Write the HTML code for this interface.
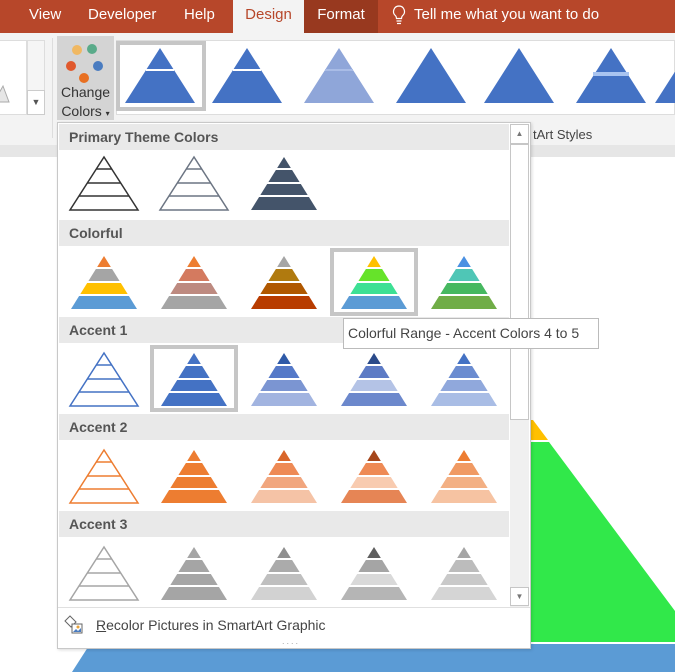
<!DOCTYPE html>
<html><head><meta charset="utf-8"><style>
*{margin:0;padding:0;box-sizing:border-box}
body{width:675px;height:672px;overflow:hidden;position:relative;background:#fff;font-family:"Liberation Sans",sans-serif}
.abs{position:absolute}
.tab{position:absolute;top:0;height:33px;line-height:29px;color:#fff;font-size:15px}
.hdr{position:absolute;left:59px;width:450px;height:26px;background:#e9e9e9;color:#555;font-weight:bold;font-size:14px;line-height:26px;padding-left:10px}
</style></head><body>
<svg class="abs" style="left:0;top:0" width="675" height="672">
<rect x="0" y="145" width="675" height="12" fill="#e6e6e6"/>
<polygon points="520,420 533,420 548,440 520,440" fill="#ffc000"/>
<polygon points="520,442 549,442 675,611 675,642 520,642" fill="#31e84a"/>
<polygon points="90,644 675,644 675,672 72,672" fill="#5b9bd5"/>
</svg>
<div class="abs" style="left:0;top:0;width:675px;height:33px;background:#b7472a"></div>
<div class="tab" style="left:29px">View</div>
<div class="tab" style="left:88px">Developer</div>
<div class="tab" style="left:184px">Help</div>
<div class="tab" style="left:233px;width:71px;background:#f3f3f3;color:#b7472a;text-align:center">Design</div>
<div class="tab" style="left:304px;width:74px;background:#98391f;text-align:center">Format</div>
<svg class="abs" style="left:392px;top:4px" width="14" height="22"><path d="M7 2a5.5 5.5 0 0 0-3.5 9.7c.8.8 1 1.6 1 2.8h5c0-1.2.2-2 1-2.8A5.5 5.5 0 0 0 7 2z M4.5 17h5 M5 19.5h4" fill="none" stroke="#fff" stroke-width="1.2"/></svg>
<div class="tab" style="left:414px">Tell me what you want to do</div>
<div class="abs" style="left:0;top:33px;width:675px;height:112px;background:#f3f3f3"></div>
<div class="abs" style="left:0;top:40px;width:27px;height:75px;background:#fff;border:1px solid #ddd;border-left:none"></div>
<svg class="abs" style="left:0;top:80px" width="10" height="24"><polygon points="-6,22 3,6 9,22" fill="#e6e6e6" stroke="#aaa"/></svg>
<div class="abs" style="left:27px;top:40px;width:18px;height:75px;border:1px solid #ddd;background:#f5f5f5"></div>
<div class="abs" style="left:27px;top:90px;width:18px;height:25px;border:1px solid #ccc;background:#fff;font-size:9px;color:#555;text-align:center;line-height:22px">▼</div>
<div class="abs" style="left:52px;top:38px;width:1px;height:100px;background:#ddd"></div>
<div class="abs" style="left:57px;top:36px;width:57px;height:84px;background:#d4d4d4"></div>
<svg class="abs" style="left:57px;top:36px" width="57" height="50">
<circle cx="20" cy="14" r="5" fill="#f0b862"/><circle cx="35" cy="13" r="5" fill="#5aab8a"/>
<circle cx="14" cy="30" r="5" fill="#e0582c"/><circle cx="41" cy="30" r="5" fill="#4a7cc0"/>
<circle cx="27" cy="42" r="5" fill="#e87022"/></svg>
<div class="abs" style="left:57px;top:83px;width:57px;text-align:center;font-size:14px;color:#333;line-height:19px">Change<br>Colors <span style="font-size:8px">▾</span></div>
<div class="abs" style="left:116px;top:40px;width:559px;height:75px;background:#fff;border:1px solid #ddd"></div>
<div class="abs" style="left:116px;top:41px;width:90px;height:70px;border:4px solid #c6c6c6"></div>
<svg id="rib" class="abs" style="left:0;top:0" width="675" height="120"></svg>
<div class="abs" style="left:533px;top:127px;font-size:13px;color:#444">tArt Styles</div>
<div class="abs" style="left:57px;top:122px;width:474px;height:527px;background:#fff;border:1px solid #c8c8c8;box-shadow:1px 1px 3px rgba(0,0,0,.15)"></div>
<div class="hdr" style="top:124px">Primary Theme Colors</div>
<div class="hdr" style="top:220px">Colorful</div>
<div class="hdr" style="top:317px">Accent 1</div>
<div class="hdr" style="top:414px">Accent 2</div>
<div class="hdr" style="top:511px">Accent 3</div>
<div class="abs" style="left:510px;top:124px;width:19px;height:483px;background:#f0f0f0"></div>
<div class="abs" style="left:510px;top:124px;width:19px;height:20px;border:1px solid #c6c6c6;background:#fff;font-size:8px;color:#777;text-align:center;line-height:18px">▲</div>
<div class="abs" style="left:510px;top:144px;width:19px;height:276px;border:1px solid #c6c6c6;background:#fff"></div>
<div class="abs" style="left:510px;top:587px;width:19px;height:19px;border:1px solid #c6c6c6;background:#fff;font-size:8px;color:#777;text-align:center;line-height:17px">▼</div>
<div class="abs" style="left:58px;top:607px;width:472px;height:1px;background:#e0e0e0"></div>
<div class="abs" style="left:330px;top:248px;width:88px;height:68px;border:4px solid #c6c6c6"></div>
<div class="abs" style="left:150px;top:345px;width:88px;height:67px;border:4px solid #c6c6c6"></div>
<svg id="gal" class="abs" style="left:0;top:0" width="675" height="672"></svg>
<svg class="abs" style="left:63px;top:615px" width="22" height="20"><path d="M2 6l5-5 6 6-5 5z" fill="#fff" stroke="#666"/><rect x="9" y="9" width="10" height="9" fill="#fff" stroke="#666"/><circle cx="15" cy="12" r="1.5" fill="#e8a23a"/><path d="M10 17l3-3 2 2 3-3v4z" fill="#4a7cc0"/></svg>
<div class="abs" style="left:96px;top:617px;font-size:14px;color:#444"><u>R</u>ecolor Pictures in SmartArt Graphic</div>
<div class="abs" style="left:282px;top:636px;font-size:9px;color:#aaa;letter-spacing:2px">....</div>
<div class="abs" style="left:343px;top:318px;width:256px;height:31px;background:#fff;border:1px solid #bbb;font-size:14px;color:#444;line-height:29px;padding-left:4px">Colorful Range - Accent Colors 4 to 5</div>
<script>
var NS="http://www.w3.org/2000/svg";
function el(svg,t,a){var e=document.createElementNS(NS,t);for(var k in a)e.setAttribute(k,a[k]);svg.appendChild(e);}
var gal=document.getElementById('gal');
function pyr(cx,top,cols,outline){
 var W=outline?68:66,H=53,b=[0,12,26,39,53];
 if(outline){
  el(gal,'polygon',{points:(cx)+','+top+' '+(cx-W/2)+','+(top+H)+' '+(cx+W/2)+','+(top+H),fill:'#fff',stroke:outline,'stroke-width':1.5});
  for(var i=1;i<4;i++){var h=W/2*b[i]/H;el(gal,'line',{x1:cx-h,x2:cx+h,y1:top+b[i],y2:top+b[i],stroke:outline,'stroke-width':1.5});}
  return;}
 for(var i=0;i<4;i++){var y0=b[i]+(i?1:0),y1=b[i+1]-(i<3?1:0);var h0=W/2*y0/H,h1=W/2*y1/H;
  el(gal,'polygon',{points:(cx-h0)+','+(top+y0)+' '+(cx+h0)+','+(top+y0)+' '+(cx+h1)+','+(top+y1)+' '+(cx-h1)+','+(top+y1),fill:cols[i]});}
}
var xs=[104,194,284,374,464];
var rows=[
 [124,[['o','#333'],['o','#6c7583'],[['#44546a','#44546a','#44546a','#44546a']]]],
 [220,[[['#ed7d31','#a5a5a5','#ffc000','#5b9bd5']],[['#ed7d31','#d47a5f','#bd8a80','#a5a5a5']],[['#a5a5a5','#b07a0f','#b05800','#b83c00']],[['#ffc000','#66e32a','#3de094','#5b9bd5']],[['#4a90e2','#4fc6b6','#46b860','#70ad47']]]],
 [317,[['o','#4472c4'],[['#4472c4','#4472c4','#4472c4','#4472c4']],[['#2f5aa8','#5579c8','#7b95d2','#a2b4e0']],[['#2a4a8a','#5d7bc5','#b4c3e6','#6c88cc']],[['#4472c4','#6b8cd0','#90a8dc','#a9bde5']]]],
 [414,[['o','#ed7d31'],[['#ed7d31','#ed7d31','#ed7d31','#ed7d31']],[['#d9662a','#ee8a55','#f1a67e','#f5c3a6']],[['#a5461b','#ee8a55','#f8cbb0','#e68555']],[['#ed7d31','#f09a63','#f3b084','#f6c3a2']]]],
 [511,[['o','#a5a5a5'],[['#a5a5a5','#a5a5a5','#a5a5a5','#a5a5a5']],[['#8f8f8f','#ababab','#bfbfbf','#d2d2d2']],[['#5f5f5f','#a5a5a5','#d9d9d9','#b5b5b5']],[['#a5a5a5','#bcbcbc','#c9c9c9','#d5d5d5']]]]
];
rows.forEach(function(r){r[1].forEach(function(p,i){var top=r[0]+(r[0]==124?33:36);if(p[0]=='o')pyr(xs[i],top,null,p[1]);else pyr(xs[i],top,p[0]);});});
var rib=document.getElementById('rib');
var rx=[160,247,339,431,519,611,690],ry=48,RH=55,RW=70;
rx.forEach(function(cx,i){
 var c=i==2?'#8fa6d9':'#4472c4';
 el(rib,'polygon',{points:cx+','+ry+' '+(cx-RW/2)+','+(ry+RH)+' '+(cx+RW/2)+','+(ry+RH),fill:c});
 if(i<3){var h=RW/2*22/RH;el(rib,'line',{x1:cx-h,x2:cx+h,y1:ry+22,y2:ry+22,stroke:i==2?'#a9bce6':'#fff','stroke-width':2});}
 if(i==5){el(rib,'rect',{x:cx-18,y:ry+24,width:36,height:4,fill:'#a9c4f0'});}
});
</script>
</body></html>
